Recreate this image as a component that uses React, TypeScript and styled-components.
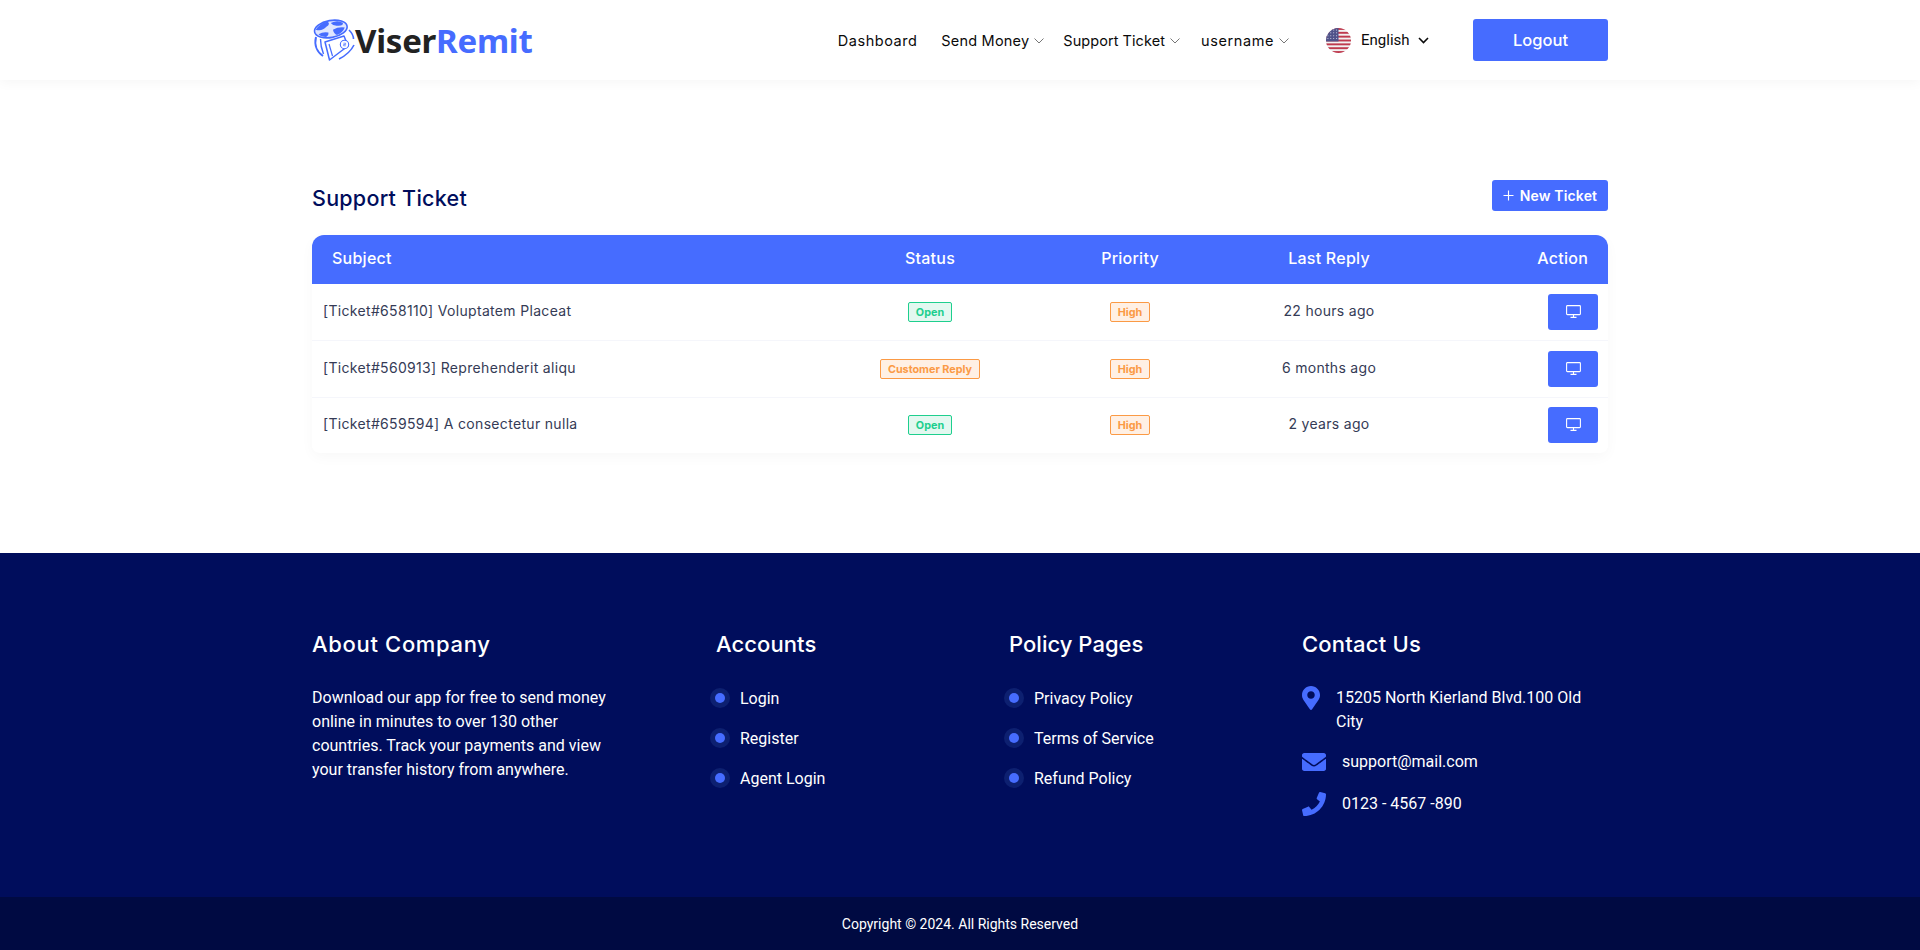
import React from "react";
import styled, { createGlobalStyle } from "styled-components";
import { FaMapMarkerAlt, FaEnvelope, FaPhone } from "react-icons/fa";

const PRIMARY = "#466cff";
const NAVY = "#000d5c";
const HEAD = '"Inter", "Liberation Sans", sans-serif';
const BODY = 'Roboto, "Liberation Sans", sans-serif';

const Global = createGlobalStyle`
  html, body { margin: 0; padding: 0; background: #fff; }
  body { font-family: ${HEAD}; overflow-x: hidden; }
  * { box-sizing: border-box; }
`;

const Header = styled.header`
  height: 80px;
  background: #fff;
  box-shadow: 0 2px 12px rgba(0, 0, 0, 0.045);
`;
const Container = styled.div`
  width: 1296px;
  margin: 0 auto;
`;
const HeaderRow = styled(Container)`
  height: 80px;
  display: flex;
  align-items: center;
  justify-content: space-between;
`;
const Logo = styled.div`
  display: flex;
  align-items: center;
  height: 45px;
`;
const LogoText = styled.span`
  font-family: "Noto Sans", sans-serif;
  font-size: 33px;
  font-weight: 700;
  letter-spacing: -0.25px;
  color: #222;
  margin-left: -2px;
  line-height: 45px;
  span { color: ${PRIMARY}; }
`;
const Nav = styled.nav`
  display: flex;
  align-items: center;
`;
const NavItem = styled.a<{ $gap: number; $ls: number }>`
  display: flex;
  align-items: center;
  font-size: 14.5px;
  font-weight: 400;
  letter-spacing: ${(p) => p.$ls}px;
  color: #0a0a0a;
  margin-right: ${(p) => p.$gap}px;
  svg { margin-left: 5px; margin-top: 2px; }
`;
const LangBox = styled.div`
  display: flex;
  align-items: center;
  width: 147px;
`;
const LangText = styled.span`
  font-family: ${BODY};
  font-size: 15px;
  color: #0a0a0a;
  margin-left: 10px;
  margin-right: 8px;
`;
const LogoutButton = styled.button`
  width: 135px;
  height: 42px;
  border: 0;
  border-radius: 3px;
  background: ${PRIMARY};
  color: #fff;
  font-family: ${HEAD};
  font-size: 16.5px;
  font-weight: 500;
`;
const Main = styled(Container)`
  padding: 100px 0;
`;
const TitleRow = styled.div`
  display: flex;
  justify-content: space-between;
  align-items: flex-start;
  height: 55px;
`;
const Title = styled.h2`
  margin: 0;
  font-size: 21.5px;
  line-height: 36px;
  font-weight: 500;
  letter-spacing: 0.25px;
  color: ${NAVY};
`;
const NewTicket = styled.button`
  width: 116px;
  height: 31px;
  display: flex;
  align-items: center;
  justify-content: center;
  gap: 6px;
  border: 0;
  border-radius: 3px;
  background: ${PRIMARY};
  color: #fff;
  font-family: ${HEAD};
  font-size: 14px;
  font-weight: 600;
  letter-spacing: 0.15px;
  white-space: nowrap;
  padding: 0;
`;
const Card = styled.div`
  border-radius: 12px 12px 8px 8px;
  box-shadow: 0 4px 14px rgba(0, 0, 0, 0.03);
  overflow: hidden;
  background: #fff;
  padding-bottom: 1px;
`;
const Row = styled.div<{ $h: number; $line?: boolean }>`
  display: grid;
  grid-template-columns: 517px 202px 198px 200px 179px;
  align-items: center;
  height: ${(p) => p.$h}px;
  background: #fff;
  border-bottom: ${(p) => (p.$line ? "1px solid #f5f6fb" : "0")};
`;
const HeadRow = styled(Row)`
  background: ${PRIMARY};
  color: #fff;
  font-size: 16px;
  font-weight: 500;
  letter-spacing: 0.25px;
`;
const HeadCell = styled.div<{ $align: string }>`
  text-align: ${(p) => p.$align};
  padding: 0 20px;
  margin-top: -3px;
`;
const SubjectCell = styled.div`
  padding-left: 11px;
  font-size: 14px;
  letter-spacing: 0.32px;
  color: #353b56;
  margin-top: -3px;
`;
const Centered = styled.div`
  display: flex;
  justify-content: center;
`;
const TimeCell = styled(Centered)`
  font-size: 14px;
  letter-spacing: 0.3px;
  color: #353b56;
  margin-top: -3px;
`;
const Badge = styled.span<{ $tone: "green" | "orange" }>`
  display: inline-flex;
  align-items: center;
  justify-content: center;
  height: 20px;
  padding: 0 7px;
  border-radius: 2px;
  font-size: 10.8px;
  font-weight: 700;
  white-space: nowrap;
  color: ${(p) => (p.$tone === "green" ? "#1ecf8e" : "#fb9a45")};
  background: ${(p) => (p.$tone === "green" ? "#e3f8f0" : "#fff0e4")};
  border: 1px solid ${(p) => (p.$tone === "green" ? "#1ecf8e" : "#fb9a45")};
`;
const ActionCell = styled.div`
  display: flex;
  justify-content: flex-end;
  padding-right: 10px;
`;
const ViewButton = styled.button`
  width: 50px;
  height: 36px;
  border: 0;
  border-radius: 3px;
  background: ${PRIMARY};
  display: flex;
  align-items: center;
  justify-content: center;
  padding: 0 0 2px;
`;
const Footer = styled.footer`
  background: ${NAVY};
  color: #fff;
  height: 344px;
  padding-top: 75px;
`;
const FooterGrid = styled(Container)`
  display: grid;
  grid-template-columns: 398px 294px 298px 306px;
`;
const FooterHeading = styled.h4<{ $indent?: number; $ls: number }>`
  margin: 0 0 25px;
  padding-left: ${(p) => p.$indent ?? 0}px;
  font-size: 22px;
  line-height: 33px;
  font-weight: 500;
  letter-spacing: ${(p) => p.$ls}px;
  color: #fff;
`;
const About = styled.p`
  margin: 0;
  width: 300px;
  font-family: ${BODY};
  font-size: 16px;
  line-height: 24px;
`;
const LinkList = styled.ul`
  list-style: none;
  margin: 0;
  padding: 0;
  display: flex;
  flex-direction: column;
  gap: 16px;
`;
const LinkItem = styled.li`
  display: flex;
  align-items: center;
  gap: 10px;
  height: 24px;
  font-family: ${BODY};
  font-size: 16px;
`;
const Bullet = styled.span`
  width: 20px;
  height: 20px;
  border-radius: 50%;
  background: #0d2070;
  display: flex;
  align-items: center;
  justify-content: center;
  &::after {
    content: "";
    width: 10px;
    height: 10px;
    border-radius: 50%;
    background: ${PRIMARY};
  }
`;
const ContactList = styled.div`
  font-family: ${BODY};
  font-size: 16px;
  line-height: 24px;
`;
const ContactRow = styled.div<{ $mb: number; $gap: number; $w: number }>`
  display: grid;
  grid-template-columns: ${(p) => p.$w}px 1fr;
  column-gap: ${(p) => p.$gap}px;
  align-items: start;
  margin-bottom: ${(p) => p.$mb}px;
  color: #fff;
  svg { color: ${PRIMARY}; display: block; }
`;
const Copyright = styled.div`
  height: 53px;
  background: #000a42;
  color: #fff;
  display: flex;
  align-items: center;
  justify-content: center;
  font-family: ${BODY};
  font-size: 14px;
  font-weight: 400;
`;

const Chevron = () => (
  <svg width="10" height="6" viewBox="0 0 10 6" fill="none" stroke="#666" strokeWidth="0.9">
    <path d="M0.5 0.5 L5 5 L9.5 0.5" />
  </svg>
);

const LogoMark = () => (
  <svg width="45" height="45" viewBox="0 0 45 45" fill="none">
    <g transform="rotate(-10 19 12)">
      <ellipse cx="19" cy="11" rx="16.5" ry="8.5" fill="#dfe6ff" stroke={PRIMARY} strokeWidth="1.6" />
      <path d="M4 9 q6 -6 13 -6 q3 3 -2 5 q-5 4 -11 1z M20 5 q7 -2 12 2 q0 3 -5 2 q-5 0 -7 -4z M21 12 q6 -2 12 0 q-3 5 -9 6 q-3 -2 -3 -6z M6 14 q5 -2 10 0 q0 3 -3 4 q-5 -1 -7 -4z" fill={PRIMARY} />
    </g>
    <path d="M4 19 C2 27 5 34 11 38" stroke={PRIMARY} strokeWidth="2" />
    <path d="M8.5 21 C8.5 27 9.5 31 11.5 36" stroke={PRIMARY} strokeWidth="1.4" />
    <path d="M13 24 L32 18 L36 28 L28 34 L17.5 42 Z" fill="#fff" stroke={PRIMARY} strokeWidth="1.5" strokeLinejoin="round" />
    <path d="M17 26 L20.5 38" stroke={PRIMARY} strokeWidth="1.2" />
    <circle cx="32.5" cy="26.5" r="4.2" fill="#fff" stroke={PRIMARY} strokeWidth="1.1" />
    <path d="M31.4 25.2 h2.2 v1.3 h-2 v1.3 h2.2" stroke={PRIMARY} strokeWidth="0.7" />
    <path d="M42 27 C39 33 33 38 27 41" stroke={PRIMARY} strokeWidth="1.6" />
    <path d="M37 12 C40 15 41.5 18 41.5 21" stroke={PRIMARY} strokeWidth="1.6" />
  </svg>
);

const Flag = () => {
  const stripes = [0, 1, 2, 3, 4, 5, 6];
  return (
    <svg width="25" height="25" viewBox="0 0 26 26">
      <defs>
        <clipPath id="flagClip"><circle cx="13" cy="13" r="13" /></clipPath>
      </defs>
      <g clipPath="url(#flagClip)">
        <rect width="26" height="26" fill="#f2f2f2" />
        {stripes.map((i) => (
          <rect key={i} y={i * 4} width="26" height="2" fill="#bf3a4e" />
        ))}
        <rect width="13" height="14" fill="#50538a" />
        {[2, 5, 8, 11].map((y) =>
          [2, 5, 8, 11].map((x) => <circle key={`${x}-${y}`} cx={x} cy={y} r="0.55" fill="#dde" />)
        )}
      </g>
    </svg>
  );
};

const PlusIcon = () => (
  <svg width="11" height="11" viewBox="0 0 11 11" stroke="#fff" strokeWidth="1.1">
    <path d="M5.5 0.5 V10.5 M0.5 5.5 H10.5" />
  </svg>
);

const Desktop = () => (
  <svg width="15" height="13" viewBox="0 0 15 13" fill="none" stroke="#fff" strokeWidth="1.1">
    <rect x="0.6" y="0.6" width="13.8" height="9" rx="0.8" />
    <path d="M7.5 9.6 V12 M4.5 12.4 H10.5" />
  </svg>
);

const tickets = [
  { id: "658110", subject: "Voluptatem Placeat", status: "Open", tone: "green" as const, time: "22 hours ago", h: 57 },
  { id: "560913", subject: "Reprehenderit aliqu", status: "Customer Reply", tone: "orange" as const, time: "6 months ago", h: 57 },
  { id: "659594", subject: "A consectetur nulla", status: "Open", tone: "green" as const, time: "2 years ago", h: 54 },
];

export default function App() {
  return (
    <>
      <Global />
      <Header>
        <HeaderRow>
          <Logo>
            <LogoMark />
            <LogoText>Viser<span>Remit</span></LogoText>
          </Logo>
          <Nav>
            <NavItem $gap={24} $ls={0.52}>Dashboard</NavItem>
            <NavItem $gap={19} $ls={0.2}>Send Money<Chevron /></NavItem>
            <NavItem $gap={21} $ls={0.06}>Support Ticket<Chevron /></NavItem>
            <NavItem $gap={37} $ls={0.6}>username<Chevron /></NavItem>
            <LangBox>
              <Flag />
              <LangText>English</LangText>
              <svg width="11" height="7" viewBox="0 0 11 7" fill="none" stroke="#0a0a0a" strokeWidth="1.6">
                <path d="M1 1 L5.5 5.5 L10 1" />
              </svg>
            </LangBox>
            <LogoutButton>Logout</LogoutButton>
          </Nav>
        </HeaderRow>
      </Header>
      <Main>
        <TitleRow>
          <Title>Support Ticket</Title>
          <NewTicket><PlusIcon />New Ticket</NewTicket>
        </TitleRow>
        <Card>
          <HeadRow $h={49}>
            <HeadCell $align="left">Subject</HeadCell>
            <HeadCell $align="center">Status</HeadCell>
            <HeadCell $align="center">Priority</HeadCell>
            <HeadCell $align="center">Last Reply</HeadCell>
            <HeadCell $align="right">Action</HeadCell>
          </HeadRow>
          {tickets.map((t, i) => (
            <Row key={t.id} $h={t.h} $line={i < 2}>
              <SubjectCell>[Ticket#{t.id}] {t.subject}</SubjectCell>
              <Centered><Badge $tone={t.tone}>{t.status}</Badge></Centered>
              <Centered><Badge $tone="orange">High</Badge></Centered>
              <TimeCell>{t.time}</TimeCell>
              <ActionCell><ViewButton><Desktop /></ViewButton></ActionCell>
            </Row>
          ))}
        </Card>
      </Main>
      <Footer>
        <FooterGrid>
          <div>
            <FooterHeading $ls={0.67}>About Company</FooterHeading>
            <About>Download our app for free to send money online in minutes to over 130 other countries. Track your payments and view your transfer history from anywhere.</About>
          </div>
          <div>
            <FooterHeading $indent={6} $ls={0.08}>Accounts</FooterHeading>
            <LinkList>
              {["Login", "Register", "Agent Login"].map((l) => (
                <LinkItem key={l}><Bullet />{l}</LinkItem>
              ))}
            </LinkList>
          </div>
          <div>
            <FooterHeading $indent={5} $ls={0.03}>Policy Pages</FooterHeading>
            <LinkList>
              {["Privacy Policy", "Terms of Service", "Refund Policy"].map((l) => (
                <LinkItem key={l}><Bullet />{l}</LinkItem>
              ))}
            </LinkList>
          </div>
          <div>
            <FooterHeading $ls={0.2}>Contact Us</FooterHeading>
            <ContactList>
              <ContactRow $w={18} $gap={16} $mb={16}>
                <FaMapMarkerAlt size={24} style={{ marginLeft: -3 }} />
                <span>15205 North Kierland Blvd.100 Old City</span>
              </ContactRow>
              <ContactRow $w={24} $gap={16} $mb={18}>
                <FaEnvelope size={24} />
                <span>support@mail.com</span>
              </ContactRow>
              <ContactRow $w={24} $gap={16} $mb={0}>
                <FaPhone size={24} />
                <span>0123 - 4567 -890</span>
              </ContactRow>
            </ContactList>
          </div>
        </FooterGrid>
      </Footer>
      <Copyright>Copyright © 2024. All Rights Reserved</Copyright>
    </>
  );
}
